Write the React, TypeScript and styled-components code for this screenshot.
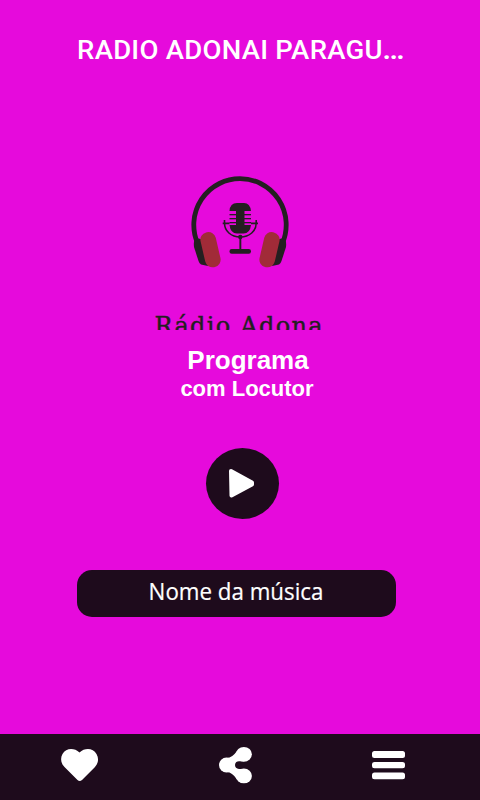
import React from 'react';
import styled, { createGlobalStyle } from 'styled-components';

const pink = '#e60adc';
const dark = '#1e0b1c';

const GlobalStyle = createGlobalStyle`
  * { box-sizing: border-box; }
  body { margin: 0; background: ${pink}; }
`;

const Screen = styled.main`
  display: flex;
  flex-direction: column;
  align-items: center;
  width: 480px;
  height: 800px;
  overflow: hidden;
  background: ${pink};
  color: #fff;
`;

const Title = styled.h1`
  margin: 0;
  padding-top: 30px;
  height: 120px;
  font: 500 26px/40px Roboto, sans-serif;
  letter-spacing: 0.25px;
  white-space: nowrap;
  transform: scaleX(1.058);
`;

const Dots = styled.span`
  letter-spacing: -1px;
  font-weight: 700;
`;

const Cover = styled.svg`
  display: block;
  flex: none;
  width: 240px;
  height: 210px;
`;

const Wordmark = styled.text`
  font: 24px 'DejaVu Serif', serif;
  fill: #231f20;
  stroke: #231f20;
  stroke-width: 0.4px;
`;

const Show = styled.section`
  display: flex;
  flex-direction: column;
  align-items: center;
  height: 118px;
  padding: 15px 0 0 14px;
  font-family: 'Liberation Sans', Arial, sans-serif;
  font-weight: 700;
`;

const ShowName = styled.div`
  font-size: 26px;
  line-height: 30px;
  padding-left: 2px;
`;

const Host = styled.div`
  font-size: 22px;
  line-height: 28px;
`;

const PlayButton = styled.button`
  display: block;
  flex: none;
  width: 73px;
  height: 71px;
  margin: 0 0 0 5px;
  padding: 0;
  border: 0;
  border-radius: 50%;
  background: ${dark};
`;

const PlayIcon = styled.svg`
  display: block;
  width: 73px;
  height: 71px;
`;

const Track = styled.div`
  display: flex;
  flex: none;
  justify-content: center;
  width: 319px;
  height: 47px;
  margin: 51px 7px 0 0;
  border-radius: 15px;
  background: ${dark};
`;

const TrackName = styled.span`
  font: 23.5px/43px 'Open Sans', sans-serif;
  white-space: nowrap;
  transform: scaleX(0.95);
  -webkit-text-stroke: 0.2px #fff;
`;

const NavBar = styled.nav`
  display: grid;
  grid-template-columns: 160px 160px 160px;
  flex: none;
  width: 480px;
  height: 66px;
  margin-top: auto;
  background: ${dark};
`;

const NavIcon = styled.svg`
  display: block;
  width: 160px;
  height: 66px;
  fill: #fff;
`;

function HeadphonesLogo() {
  return (
    <Cover viewBox="120 120 240 210" aria-label="Rádio Adonai">
      <path d="M197.500 243A46.200 46.200 0 1 1 282.500 243" fill="none" stroke="#231f20" strokeWidth="4.8" />
      <path d="M194.500 240Q199 237 202 240L208 266L201 264.500Q199.500 264 198.500 261L194 247Q193.500 242 194.500 240Z" fill="#231f20" />
      <path d="M285.500 240Q281 237 278 240L272 266L279 264.500Q280.500 264 281.500 261L286 247Q286.500 242 285.500 240Z" fill="#231f20" />
      <rect x="202.700" y="231.900" width="15.600" height="35.600" rx="7.400" fill="#a12b38" transform="rotate(-13 210.500 249.700)" />
      <rect x="261.700" y="231.900" width="15.600" height="35.600" rx="7.400" fill="#a12b38" transform="rotate(13 269.500 249.700)" />
      <g fill="#231f20">
        <path d="M229.500 211Q230 203 237 203H244Q250 203 251 211H244.500V225H251Q250 233.500 243.500 233.500H237Q230.500 233.500 229.500 225H236V211Z" />
        <rect x="229.500" y="214" width="21.500" height="1.300" />
        <rect x="229.500" y="218" width="21.500" height="1.300" />
        <rect x="229.500" y="222" width="21.500" height="1.300" />
        <circle cx="240.300" cy="237" r="2.200" />
        <rect x="239.400" y="237" width="1.900" height="13" />
        <rect x="229.500" y="249" width="21.500" height="4.800" rx="2.200" />
      </g>
      <path d="M224.500 220V223C224.500 231 231 237 240.300 237C249.500 237 256.200 231 256.200 223V220M222.700 223.400H229.500M251 223.400H258" fill="none" stroke="#231f20" strokeWidth="1.600" />
      <Wordmark x="154.500" y="334" textLength="168" lengthAdjust="spacing">Rádio Adona</Wordmark>
    </Cover>
  );
}

export default function App() {
  return (
    <>
      <GlobalStyle />
      <Screen>
        <Title>RADIO ADONAI PARAGU<Dots>...</Dots></Title>
        <HeadphonesLogo />
        <Show>
          <ShowName>Programa</ShowName>
          <Host>com Locutor</Host>
        </Show>
        <PlayButton aria-label="Play">
          <PlayIcon viewBox="206 448 73 71">
            <path d="M231 471L252 482.500V484.500L231.500 495.500Z" fill="#fff" stroke="#fff" strokeWidth="4" strokeLinejoin="round" />
          </PlayIcon>
        </PlayButton>
        <Track><TrackName>Nome da música</TrackName></Track>
        <NavBar>
          <NavIcon viewBox="0 734 160 66">
            <path d="M79.500 752.500C74 747.500 66 748 62.500 754C60 758.500 61 763.500 64.500 767L77.500 780Q79.700 782 82 780L95 767C98.500 763 99 758.500 96.500 754C93 748 85 747.500 79.500 752.500Z" />
          </NavIcon>
          <NavIcon viewBox="160 734 160 66">
            <ellipse cx="226.500" cy="765" rx="7.500" ry="7.400" />
            <ellipse cx="243.900" cy="754.300" rx="8" ry="7.400" />
            <ellipse cx="243.900" cy="775.900" rx="8" ry="7.400" />
            <path d="M227 758Q232 758 237 751L244 761.300H239Q235 761.700 235 765Q235 768.600 239 769H244L237 779.500Q232 772 227 772Z" />
          </NavIcon>
          <NavIcon viewBox="320 734 160 66">
            <rect x="372" y="751" width="33" height="7" rx="2.500" />
            <rect x="372" y="762" width="33" height="6.200" rx="2.500" />
            <rect x="372" y="772.500" width="33" height="6.800" rx="2.500" />
          </NavIcon>
        </NavBar>
      </Screen>
    </>
  );
}
